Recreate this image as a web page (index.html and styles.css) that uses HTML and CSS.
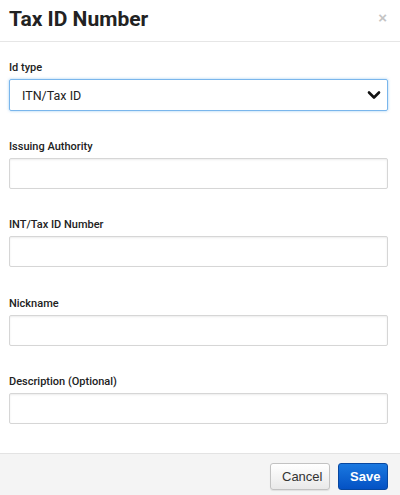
FILE: index.html
```html
<!DOCTYPE html>
<html>
<head>
<meta charset="utf-8">
<link rel="stylesheet" href="styles.css">
</head>
<body>
<div class="modal">
  <div class="modal-header">
    <h1 class="title">Tax ID Number</h1>
    <span class="close">×</span>
  </div>
  <div class="modal-body">
    <div class="field">
      <label class="label">Id type</label>
      <div class="select">
        <span class="select-value">ITN/Tax ID</span>
        <svg class="chevron" width="14" height="10" viewBox="0 0 14 10"><path d="M2 2.5 L7 7.5 L12 2.5" fill="none" stroke="#111" stroke-width="2.6" stroke-linecap="round" stroke-linejoin="round"/></svg>
      </div>
    </div>
    <div class="field">
      <label class="label">Issuing Authority</label>
      <div class="input"></div>
    </div>
    <div class="field">
      <label class="label">INT/Tax ID Number</label>
      <div class="input"></div>
    </div>
    <div class="field">
      <label class="label">Nickname</label>
      <div class="input"></div>
    </div>
    <div class="field">
      <label class="label">Description (Optional)</label>
      <div class="input"></div>
    </div>
  </div>
  <div class="modal-footer">
    <button class="btn btn-cancel">Cancel</button>
    <button class="btn btn-save">Save</button>
  </div>
</div>
</body>
</html>
```
FILE: styles.css
```css
html, body {
  margin: 0;
  padding: 0;
  background: #fff;
}
body {
  font-family: Roboto, "Liberation Sans", sans-serif;
  color: #222;
  width: 400px;
  height: 495px;
  overflow: hidden;
}
.modal {
  display: flex;
  flex-direction: column;
  height: 495px;
}
.modal-header {
  height: 41px;
  border-bottom: 1px solid #e6e6e6;
  display: flex;
  align-items: center;
  justify-content: space-between;
  padding: 0 12px 0 9px;
  box-sizing: content-box;
}
.title {
  margin: 0;
  font-size: 21px;
  font-weight: 700;
  color: #222;
  line-height: 38px;
  margin-top: -4px;
}
.close {
  font-family: "Liberation Sans", sans-serif;
  font-weight: 700;
  font-size: 15px;
  color: #c4c4c4;
  margin-top: -7px;
  margin-right: 1px;
}
.modal-body {
  flex: 1;
  padding: 18px 12px 0 9px;
}
.field {
  display: flex;
  flex-direction: column;
  margin-bottom: 28.5px;
}
.label {
  font-size: 11px;
  font-weight: 500;
  line-height: 15px;
  margin-bottom: 4px;
  color: #222;
}
.select {
  height: 32px;
  box-sizing: border-box;
  border: 1px solid #7ab6ec;
  border-radius: 2px;
  box-shadow: 0 0 3px rgba(102, 175, 233, 0.6);
  display: flex;
  align-items: center;
  justify-content: space-between;
  padding: 0 6px 0 12px;
  margin-bottom: -1px;
}
.select-value {
  font-size: 12.5px;
  color: #222;
}
.chevron {
  display: block;
}
.input {
  height: 31px;
  box-sizing: border-box;
  border: 1px solid #d6d6d6;
  border-radius: 2px;
  box-shadow: inset 0 1px 2px rgba(0, 0, 0, 0.08);
  background: #fff;
}
.modal-footer {
  height: 42px;
  border-top: 1px solid #e3e3e3;
  background: #f4f4f4;
  display: flex;
  justify-content: flex-end;
  align-items: flex-start;
  gap: 8px;
  padding: 9px 12px 0 9px;
  box-sizing: border-box;
  flex: none;
}
.btn {
  height: 27px;
  font-family: "Liberation Sans", Arial, sans-serif;
  font-size: 13px;
  border-radius: 3px;
  padding: 0 11px;
  cursor: pointer;
}
.btn-cancel {
  width: 60px;
  background: linear-gradient(#ffffff, #e9e9e9);
  border: 1px solid #c2c2c2;
  color: #333;
  box-shadow: 0 1px 1px rgba(0,0,0,0.08);
}
.btn-save {
  width: 50px;
  background: linear-gradient(#1a78e0, #0452c4);
  border: 1px solid #0747a0;
  color: #fff;
  font-weight: 700;
}
```
